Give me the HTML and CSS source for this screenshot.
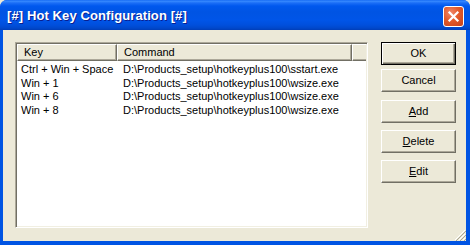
FILE: index.html
```html
<!DOCTYPE html>
<html>
<head>
<meta charset="utf-8">
<link rel="stylesheet" href="styles.css">
</head>
<body>
<div class="window">
  <div class="titlebar">
    <span class="title">[#] Hot Key Configuration [#]</span>
    <div class="close">
      <svg width="21" height="21" viewBox="0 0 21 21">
        <path d="M6.5 6.5 L14.5 14.5 M14.5 6.5 L6.5 14.5" stroke="#fff" stroke-width="2.2" stroke-linecap="square"/>
      </svg>
    </div>
  </div>
  <div class="client">
    <div class="listview">
      <div class="header">
        <div class="hcol key">Key</div>
        <div class="hcol cmd">Command</div>
        <div class="hcol fill"></div>
      </div>
      <div class="rows">
        <div class="row"><span class="c1">Ctrl + Win + Space</span><span class="c2">D:\Products_setup\hotkeyplus100\sstart.exe</span></div>
        <div class="row"><span class="c1">Win + 1</span><span class="c2">D:\Products_setup\hotkeyplus100\wsize.exe</span></div>
        <div class="row"><span class="c1">Win + 6</span><span class="c2">D:\Products_setup\hotkeyplus100\wsize.exe</span></div>
        <div class="row"><span class="c1">Win + 8</span><span class="c2">D:\Products_setup\hotkeyplus100\wsize.exe</span></div>
      </div>
    </div>
    <div class="buttons">
      <div class="btn default">OK</div>
      <div class="btn cancel">Cancel</div>
      <div class="btn gap"><u>A</u>dd</div>
      <div class="btn"><u>D</u>elete</div>
      <div class="btn"><u>E</u>dit</div>
    </div>
    <div class="grip">
      <svg width="12" height="12" viewBox="0 0 12 12">
        <path d="M11 1 L1 11 M11 5 L5 11 M11 9 L9 11" stroke="#ffffff" stroke-width="1"/>
        <path d="M12 2 L2 12 M12 6 L6 12 M12 10 L10 12" stroke="#A8A594" stroke-width="1"/>
      </svg>
    </div>
  </div>
</div>
</body>
</html>
```
FILE: styles.css
```css
html, body {
  margin: 0;
  padding: 0;
  background: #ECE9D8;
}
.window {
  width: 470px;
  height: 245px;
  display: flex;
  flex-direction: column;
  background: #0054E3;
  border-radius: 7px 7px 0 0;
  overflow: hidden;
  font-family: "Liberation Sans", Arial, sans-serif;
  font-size: 11px;
  color: #000;
}
.titlebar {
  height: 30px;
  flex: none;
  display: flex;
  align-items: center;
  justify-content: space-between;
  padding: 0 6px 0 7px;
  box-sizing: border-box;
  background: linear-gradient(to bottom, #0A5FF0 0px, #3A8CFF 1px, #1B6EF6 3px, #0058EE 6px, #0054E3 12px, #0055E8 20px, #004FDC 25px, #0048CC 28px, #003DB8 30px);
}
.title {
  color: #fff;
  font-weight: bold;
  font-size: 13px;
  letter-spacing: 0.1px;
  text-shadow: 1px 1px 0 #0A1E8F;
  margin-top: 1px;
}
.close {
  width: 21px;
  height: 21px;
  box-sizing: border-box;
  border: 1px solid #fff;
  border-radius: 3px;
  background: radial-gradient(circle at 35% 30%, #F0876A 0%, #E35A2A 45%, #C7401A 100%);
  display: flex;
  margin-top: 3px;
}
.close svg { display: block; margin: -1px; }
.client {
  flex: 1;
  margin: 0 4px 4px 3px;
  background: #ECE9D8;
  display: flex;
  padding: 12px 0 0 12px;
  position: relative;
}
.listview {
  width: 353px;
  height: 186px;
  box-sizing: border-box;
  border-top: 1px solid #ACA899;
  border-left: 1px solid #ACA899;
  border-right: 1px solid #fff;
  border-bottom: 1px solid #fff;
  box-shadow: inset 1px 1px 0 #716F64, inset -1px -1px 0 #F1EFE2;
  padding: 1px;
  background: #fff;
  display: flex;
  flex-direction: column;
}
.header {
  display: flex;
  height: 17px;
  flex: none;
  background: #ECE9D8;
}
.hcol {
  box-sizing: border-box;
  height: 17px;
  line-height: 15px;
  padding-left: 6px;
  border-top: 1px solid #fff;
  border-left: 1px solid #fff;
  border-right: 1px solid #716F64;
  border-bottom: 1px solid #716F64;
  box-shadow: inset -1px -1px 0 #ACA899;
}
.hcol.key { width: 100px; }
.hcol.cmd { width: 235px; }
.hcol.fill { flex: 1; border-right: none; box-shadow: inset 0 -1px 0 #ACA899; }
.rows {
  padding-top: 1px;
}
.row {
  display: flex;
  height: 13.7px;
  line-height: 14px;
  white-space: nowrap;
}
.c1 { width: 100px; padding-left: 4px; box-sizing: border-box; }
.c2 { padding-left: 6px; }
.buttons {
  display: flex;
  flex-direction: column;
  margin-left: 13px;
  gap: 7px;
}
.btn {
  width: 75px;
  height: 23px;
  box-sizing: border-box;
  display: flex;
  align-items: center;
  justify-content: center;
  background: #ECE9D8;
  border-top: 1px solid #fff;
  border-left: 1px solid #fff;
  border-right: 1px solid #716F64;
  border-bottom: 1px solid #716F64;
  box-shadow: inset -1px -1px 0 #ACA899;
  padding-bottom: 1px;
}
.btn.default {
  border: 1px solid #000;
  box-shadow: inset 1px 1px 0 #fff, inset -1px -1px 0 #716F64, inset -2px -2px 0 #ACA899;
}
.btn.cancel { margin-top: -3px; }
.btn.gap { margin-top: 1px; }
.btn u { text-decoration: underline; text-underline-offset: 1px; }
.grip {
  position: absolute;
  right: 0;
  bottom: 0;
  width: 12px;
  height: 12px;
}
.grip svg { display: block; }
```
